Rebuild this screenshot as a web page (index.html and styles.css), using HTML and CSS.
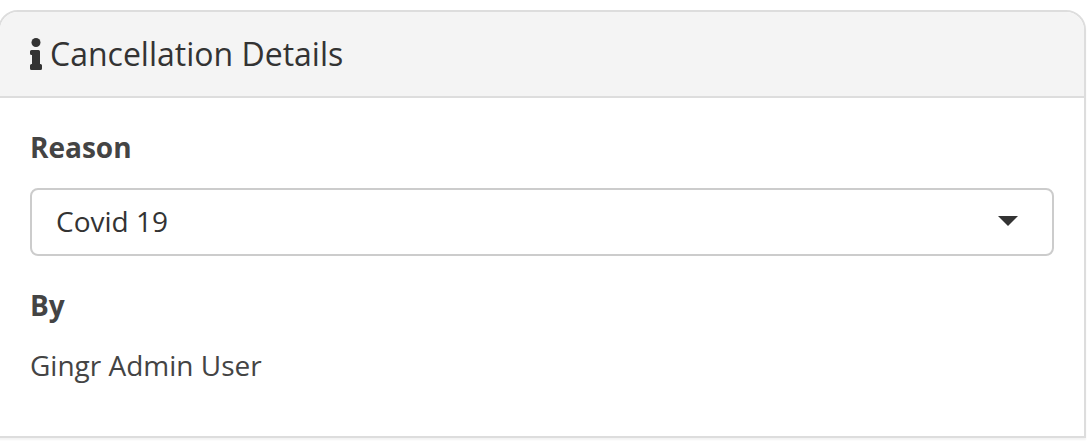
FILE: index.html
```html
<!DOCTYPE html>
<html lang="en">
<head>
  <title>Cancellation Details</title>
  <meta charset="UTF-8">
  <meta name="viewport" content="width=device-width, initial-scale=1.0">
  <link rel="stylesheet" href="styles.css">
</head>
<body>
  <section class="panel">
    <header class="panel-heading">
      <svg class="icon-info" viewBox="0 0 12 32" aria-hidden="true">
        <circle cx="6" cy="4.5" r="4.5"/>
        <path d="M1.5 12H8.5Q10 12 10 13.5V26H10.5Q12 26 12 27.5V30.5Q12 32 10.5 32H1.5Q0 32 0 30.5V27.5Q0 26 1.5 26H2V17H1.5Q0 17 0 15.5V13.5Q0 12 1.5 12Z"/>
      </svg>
      <h1 class="panel-title">Cancellation Details</h1>
    </header>

    <div class="panel-body">
      <div class="form-group">
        <label class="form-label" for="reason">Reason</label>
        <div class="select-wrap">
          <select class="form-select" id="reason">
            <option>Covid 19</option>
          </select>
          <svg class="caret" viewBox="0 0 20 10" aria-hidden="true">
            <path d="M0 0H20L10 10Z"/>
          </svg>
        </div>
      </div>

      <dl class="form-group">
        <dt class="form-label">By</dt>
        <dd class="form-value">Gingr Admin User</dd>
      </dl>
    </div>
  </section>
</body>
</html>
```

FILE: styles.css
```css
* {
  box-sizing: border-box;
}

body {
  margin: 0;
  padding: 10px 2px 4px 0;
  background-color: #fff;
  color: #444;
  font-family: "Open Sans", sans-serif;
  font-size: 28px;
  line-height: 38px;
}

.panel {
  margin-left: -2px;
  border: 2px solid #ddd;
  border-radius: 20px 20px 0 0;
  background-color: #fff;
  box-shadow: 0 2px 2px rgba(0, 0, 0, 0.05);
}

.panel-heading {
  display: flex;
  align-items: center;
  gap: 8px;
  padding: 20px 30px;
  border-bottom: 2px solid #ddd;
  border-radius: 18px 18px 0 0;
  background-color: #f4f4f4;
  color: #333;
}

.icon-info {
  width: 12px;
  height: 32px;
  fill: #333;
}

.panel-title {
  margin: 0;
  font-size: 32px;
  font-weight: 400;
  line-height: 44px;
}

.panel-body {
  display: flex;
  flex-direction: column;
  gap: 30px;
  padding: 30px 30px 52px;
}

.form-group {
  display: flex;
  flex-direction: column;
  gap: 22px;
  margin: 0;
}

.form-label {
  font-weight: 700;
}

.form-value {
  margin: 0;
}

/* select and caret share one grid cell */
.select-wrap {
  display: grid;
  align-items: center;
}

.form-select,
.caret {
  grid-area: 1 / 1;
}

.form-select {
  appearance: none;
  width: 100%;
  height: 68px;
  padding: 0 60px 2px 24px;
  border: 2px solid #ccc;
  border-radius: 8px;
  background-color: #fff;
  color: #333;
  font: inherit;
}

.caret {
  justify-self: end;
  width: 20px;
  height: 10px;
  margin: 0 36px 2px 0;
  fill: #333;
  pointer-events: none;
}
```
